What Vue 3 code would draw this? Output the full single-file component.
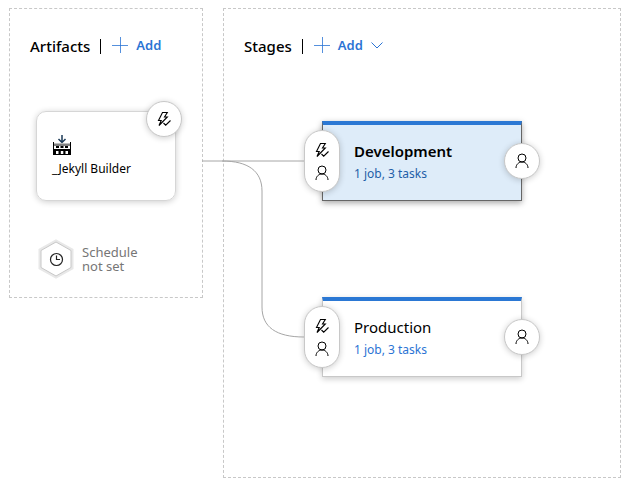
<script setup>
const stages = [
  { name: 'Development', summary: '1 job, 3 tasks', selected: true },
  { name: 'Production', summary: '1 job, 3 tasks', selected: false },
]
</script>

<template>
  <main class="pipeline">
    <svg class="symbols" aria-hidden="true">
      <symbol id="plus" viewBox="0 0 16 16">
        <path d="M8.5 0v16M0 8.500h16" fill="none" stroke="currentColor" stroke-opacity="0.8" />
      </symbol>
      <symbol id="trigger" viewBox="0 0 16 16">
        <path
          d="M6.500 1.500h4.800L8.500 6h2.800L3 14.500 5.200 9.500H2.500zM7.500 12l2.200 2.200 4.800-4.700"
          fill="none" stroke="currentColor" stroke-width="1.1"
        />
      </symbol>
      <symbol id="person" viewBox="0 0 16 16">
        <circle cx="8" cy="5" r="4" fill="none" stroke="currentColor" />
        <path d="M2 15c0-3.500 2.700-6 6-6s6 2.500 6 6" fill="none" stroke="currentColor" />
      </symbol>
    </svg>

    <section class="panel artifacts">
      <header class="panel-header">
        <h2>Artifacts</h2>
        <span class="divider"></span>
        <button type="button" class="add">
          <svg class="plus"><use href="#plus" /></svg>
          <span>Add</span>
        </button>
      </header>

      <article class="artifact">
        <svg class="build-icon" viewBox="0 0 18 20" aria-hidden="true">
          <path d="M9 0v7M5.500 4 9 7.500 12.500 4" fill="none" stroke="#1b3a57" stroke-width="1.500" />
          <path
            d="M0 7h1v3h16V7h1v13H0zM1 10v4h16v-4zM3 16v3h2.500v-3zM7.800 16v3h2.500v-3zM12.500 16v3H15v-3z"
            fill="#000" fill-rule="evenodd"
          />
          <path d="M1 9.500h16M3 12h3M7.500 12h3M12 12h3" fill="none" stroke="#000" stroke-width="2" />
          <path d="M1 9h16" fill="none" stroke="#fff" stroke-width="1" />
        </svg>
        <span class="artifact-name">_Jekyll Builder</span>
        <button type="button" class="badge artifact-trigger" aria-label="Continuous deployment trigger">
          <svg class="glyph"><use href="#trigger" /></svg>
        </button>
      </article>

      <button type="button" class="schedule">
        <svg class="hexagon" viewBox="0 0 36 40" aria-hidden="true">
          <path d="M18 2 34 11v18L18 38 2 29V11z" fill="#fff" stroke="#e8e8e8" stroke-width="3" />
          <path d="M18 3 33 11.500v17L18 37 3 28.500v-17z" fill="#fff" stroke="#c8c8c8" />
          <circle cx="18.500" cy="20.500" r="6" fill="none" stroke="#222" stroke-width="1.200" />
          <path d="M18.500 16.500v4h3.500" fill="none" stroke="#222" stroke-width="1.200" />
        </svg>
        <span>Schedule<br />not set</span>
      </button>
    </section>

    <section class="panel stages">
      <header class="panel-header">
        <h2>Stages</h2>
        <span class="divider"></span>
        <button type="button" class="add">
          <svg class="plus"><use href="#plus" /></svg>
          <span>Add</span>
          <svg class="chevron" viewBox="0 0 12 7" aria-hidden="true">
            <path d="m.5.5 5.500 5.500L11.500.5" fill="none" stroke="currentColor" />
          </svg>
        </button>
      </header>

      <div class="stage-list">
        <article v-for="stage in stages" :key="stage.name" class="stage" :class="{ selected: stage.selected }">
          <div class="badge pre">
            <button type="button" aria-label="Triggers">
              <svg class="glyph"><use href="#trigger" /></svg>
            </button>
            <button type="button" aria-label="Pre-deployment approvals">
              <svg class="glyph"><use href="#person" /></svg>
            </button>
          </div>
          <h3>{{ stage.name }}</h3>
          <a href="#tasks">{{ stage.summary }}</a>
          <button type="button" class="badge post" aria-label="Post-deployment approvals">
            <svg class="glyph"><use href="#person" /></svg>
          </button>
        </article>
      </div>
    </section>

    <svg class="wires" viewBox="0 0 102 180" aria-hidden="true">
      <path d="M0 2h102M20 2c26 0 40 10 40 30v116c0 20 14 30 42 30" fill="none" stroke="#a6a6a6" />
    </svg>
  </main>
</template>

<style>
body {
  margin: 0;
  background: #fff;
}
</style>

<style scoped>
* {
  box-sizing: border-box;
}

.pipeline {
  position: relative;
  display: flex;
  align-items: flex-start;
  gap: 20px;
  padding: 8px 12px 14px 9px;
  font-family: "Segoe UI", "Noto Sans", "Open Sans", sans-serif;
  font-size: 12px;
  color: #000;
}

.symbols {
  position: absolute;
  width: 0;
  height: 0;
}

button {
  margin: 0;
  padding: 0;
  border: 0;
  background: none;
  font: inherit;
  color: inherit;
  cursor: pointer;
}

svg {
  display: block;
  flex: none;
}

.panel {
  border: 1px dashed #c8c8c8;
}

.artifacts {
  flex: none;
  width: 194px;
  padding: 26px 26px 18px;
}

.stages {
  flex: 1;
  min-width: 0;
  padding: 26px 20px 100px;
}

.panel-header {
  display: flex;
  align-items: center;
  height: 22px;
}

.artifacts .panel-header {
  margin-left: -6px;
}

h2 {
  margin: 0;
  font-size: 15px;
  font-weight: 500;
  line-height: 22px;
}

.divider {
  width: 1px;
  height: 15px;
  margin: 0 11px 0 10px;
  background: #000;
}

.add {
  display: flex;
  align-items: center;
  gap: 8px;
  padding-bottom: 2px;
  font-size: 13px;
  font-weight: 600;
  line-height: 20px;
  color: #2b74d4;
}

.plus {
  width: 16px;
  height: 16px;
}

.chevron {
  width: 12px;
  height: 7px;
}

.badge {
  position: absolute;
  display: flex;
  align-items: center;
  justify-content: center;
  width: 36px;
  height: 36px;
  border: 1px solid #c8c8c8;
  border-radius: 18px;
  background: #fff;
  box-shadow: 0 1px 6px rgba(0, 0, 0, 0.2);
}

.glyph {
  width: 16px;
  height: 16px;
}

.artifact {
  position: relative;
  display: flex;
  flex-direction: column;
  gap: 4px;
  width: 140px;
  height: 90px;
  margin-top: 54px;
  padding: 23px 15px;
  border: 1px solid #d6d6d6;
  border-radius: 10px;
  box-shadow: 0 1px 6px rgba(0, 0, 0, 0.2);
}

.build-icon {
  width: 18px;
  height: 20px;
  margin-left: 1px;
}

.artifact-name {
  line-height: 20px;
}

.artifact-trigger {
  top: -11px;
  right: -7px;
}

.schedule {
  display: flex;
  align-items: center;
  gap: 8px;
  margin: 38px 0 0 2px;
  font-size: 13px;
  line-height: 14px;
  text-align: left;
  color: #767676;
}

.hexagon {
  width: 36px;
  height: 40px;
}

.stage-list {
  display: flex;
  flex-direction: column;
  gap: 96px;
  margin: 64px 0 0 78px;
}

.stage {
  position: relative;
  width: 200px;
  height: 80px;
  padding: 14px 31px;
  border: 1px solid #c8c8c8;
  border-top: 4px solid #2b78d4;
  background: #fff;
  box-shadow: 0 2px 6px rgba(0, 0, 0, 0.2);
}

.stage.selected {
  border-color: #2b78d4 #666 #666;
  background: #deecf9;
  box-shadow: 0 2px 6px rgba(0, 0, 0, 0.35);
}

.stage h3 {
  margin: 0 0 2px;
  font-size: 15px;
  font-weight: 400;
  line-height: 24px;
}

.stage.selected h3 {
  font-weight: 600;
}

.stage a {
  display: block;
  line-height: 18px;
  color: #2b74d4;
  text-decoration: none;
}

.stage.selected a {
  color: #1f5fa8;
}

.pre {
  top: 5px;
  left: -19px;
  flex-direction: column;
  gap: 7px;
  height: 62px;
}

.post {
  top: 18px;
  right: -19px;
}

.wires {
  position: absolute;
  top: 159px;
  left: 202px;
  width: 102px;
  height: 180px;
  pointer-events: none;
}
</style>
